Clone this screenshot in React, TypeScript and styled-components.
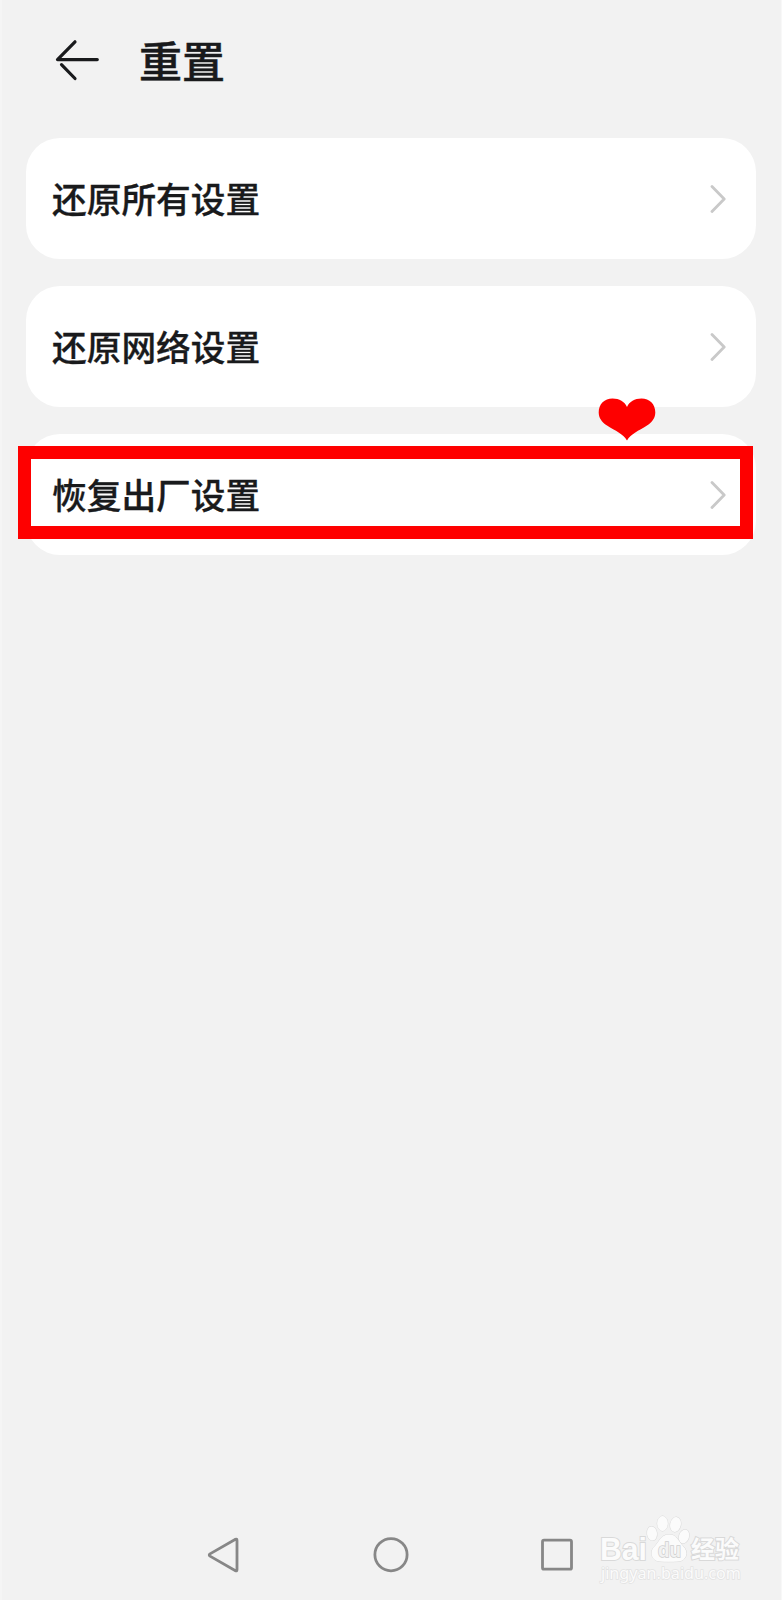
import React from "react";
import styled, { createGlobalStyle } from "styled-components";

const Global = createGlobalStyle`
  html, body { margin: 0; padding: 0; background: #f2f2f2; }
  * { box-sizing: border-box; }
`;

const Screen = styled.div`
  position: relative;
  display: flex;
  flex-direction: column;
  width: 782px;
  height: 1600px;
  overflow: hidden;
  background: #f2f2f2;
  border-left: 2px solid #f5f5f5;
  border-right: 1px solid #f8f8f8;
  color: #191a1c;
  font-family: "Noto Sans CJK SC", sans-serif;
`;

const Header = styled.header`
  display: flex;
  align-items: center;
  height: 121px;
  padding: 0 0 0 51px;
  gap: 38px;
`;

const Title = styled.h1`
  margin: 0 0 3px;
  font-size: 43px;
  line-height: 60px;
  font-weight: 500;
  -webkit-text-stroke: 0.5px currentColor;
`;

const List = styled.main`
  display: flex;
  flex-direction: column;
  gap: 27px;
  padding: 17px 25px 0 24px;
  flex: 1;
`;

const Card = styled.section`
  position: relative;
  display: flex;
  align-items: center;
  justify-content: space-between;
  height: 121px;
  padding: 0 30px 0 26px;
  border-radius: 34px;
  background: #fff;
`;

const Label = styled.span`
  margin-bottom: 1px;
  font-size: 34.7px;
  line-height: 50px;
  font-weight: 500;
  white-space: nowrap;
  -webkit-text-stroke: 0.3px currentColor;
`;

const Frame = styled.div`
  position: absolute;
  left: -8px;
  top: 12px;
  width: 735px;
  height: 93px;
  border: 13px solid #fe0000;
`;

const Heart = styled.svg`
  position: absolute;
  left: 572px;
  top: -36px;
`;

const NavBar = styled.nav`
  display: flex;
  align-items: center;
  height: 91px;
  padding: 0 207px 0 205px;
  justify-content: space-between;
`;

const Watermark = styled.div`
  position: absolute;
  left: 596px;
  top: 1514px;
  width: 146px;
  height: 76px;
`;

const Chevron = () => (
  <svg width="16" height="30" viewBox="0 0 16 30" fill="none" stroke="#c9c9c9" strokeWidth="2.8" strokeLinecap="round" strokeLinejoin="round">
    <path d="M2 2.5 14.2 15 2 27.5" />
  </svg>
);

const navIcon = { fill: "none", stroke: "#878787", strokeWidth: 2.8, strokeLinejoin: "round" as const };

const rows = [
  { label: "还原所有设置" },
  { label: "还原网络设置" },
  { label: "恢复出厂设置", marked: true },
];

export default function App() {
  return (
    <Screen>
      <Global />
      <Header>
        <svg width="48" height="44" viewBox="0 0 48 44" fill="none" stroke="#191a1c" strokeWidth="3.2" strokeLinecap="round" strokeLinejoin="round">
          <path d="M22 2.8 4.5 20.6H44.3M8.5 25.600 22 39.5" />
        </svg>
        <Title>重置</Title>
      </Header>
      <List>
        {rows.map((row) => (
          <Card key={row.label}>
            <Label>{row.label}</Label>
            <Chevron />
            {row.marked && (
              <>
                <Frame />
                <Heart width="58" height="43" viewBox="0 0 58 43" fill="#fe0000">
                  <path d="M29 42.5C25 35.500 17.500 33 9 27.500 3.500 24 .7 19.500.7 14.500.7 6 6.500.5 14.500.5 21.500.5 26.500 3.500 29 9 31.500 3.500 36.500.5 43.500.5 51.500.5 57.300 6 57.300 14.500 57.300 19.500 54.500 24 49 27.500 40.500 33 33 35.500 29 42.500Z" />
                </Heart>
              </>
            )}
          </Card>
        ))}
      </List>
      <NavBar>
        <svg width="34" height="38" viewBox="0 0 34 38" {...navIcon}>
          <path d="M3 17.900Q1.500 19 3 20.100L28.500 34.700Q30 35.500 30 33.500V4.500Q30 2.500 28.500 3.300Z" />
        </svg>
        <svg width="38" height="38" viewBox="0 0 38 38" {...navIcon}>
          <circle cx="19" cy="18.700" r="16.100" />
        </svg>
        <svg width="34" height="38" viewBox="0 0 34 38" {...navIcon}>
          <rect x="2.500" y="4.200" width="29" height="29" rx="1.500" />
        </svg>
      </NavBar>
      <Watermark>
        <svg width="146" height="76" viewBox="0 0 146 76" overflow="visible" fill="#fbfbfb" stroke="#d9d9d9" strokeWidth="1" paintOrder="stroke">
          <text x="2" y="46" fontFamily="Liberation Sans, sans-serif" fontWeight="700" fontSize="32" textLength="47" lengthAdjust="spacingAndGlyphs" strokeWidth="2">Bai</text>
          <ellipse cx="54" cy="19.500" rx="5" ry="7" transform="rotate(-8 54 19.500)" />
          <ellipse cx="64.500" cy="9.500" rx="5.300" ry="7.500" />
          <ellipse cx="77.500" cy="10.500" rx="5.300" ry="7.500" transform="rotate(12 77.500 10.500)" />
          <ellipse cx="86" cy="22.500" rx="5" ry="7" transform="rotate(18 86 22.500)" />
          <path d="M71 20.500C63 20.500 61 28 57 32 51 37 53 47 62 47.500 67 47.800 74 47.800 80 47.500 89 47 91 37.500 85 32 80 27 79 20.500 71 20.500Z" />
          <text x="60" y="43" fontFamily="Liberation Sans, sans-serif" fontWeight="700" fontSize="20" textLength="23" lengthAdjust="spacingAndGlyphs" fill="#f2f2f2" stroke="#cfcfcf" strokeWidth="1.500">du</text>
          <text x="93" y="44" fontFamily="Noto Sans CJK SC, sans-serif" fontWeight="700" fontSize="24" textLength="48" strokeWidth="2">经验</text>
          <text x="3" y="65" fontFamily="Noto Sans, sans-serif" fontSize="17" textLength="140" lengthAdjust="spacingAndGlyphs" stroke="#e2e2e2" strokeWidth="1.500">jingyan.baidu.com</text>
        </svg>
      </Watermark>
    </Screen>
  );
}
